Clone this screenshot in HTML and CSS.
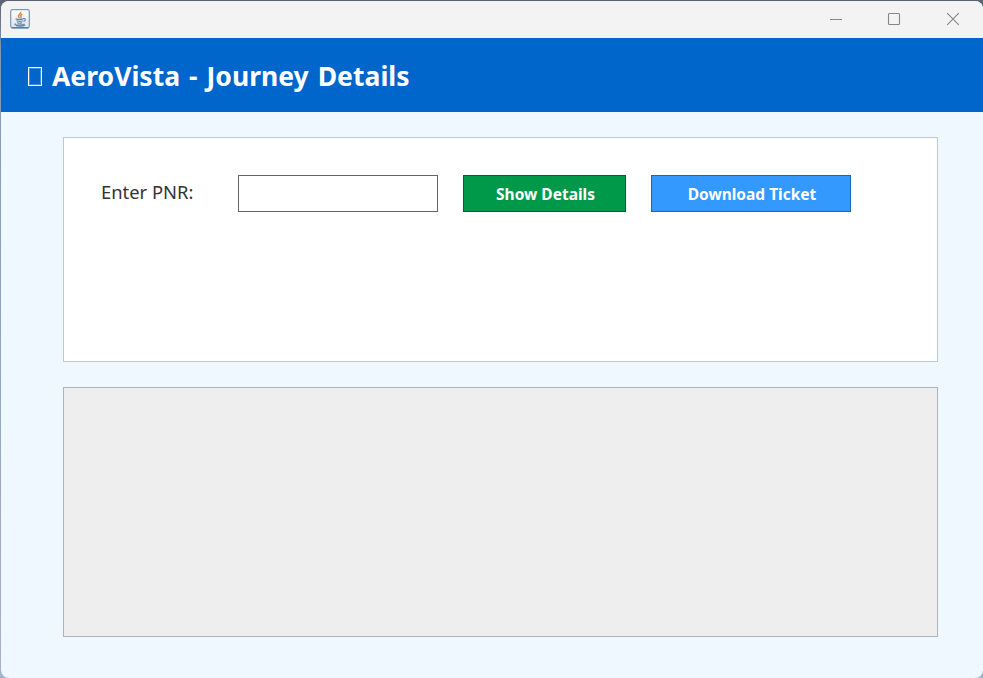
FILE: index.html
```html
<!DOCTYPE html>
<html lang="en">
<head>
<meta charset="utf-8">
<title>AeroVista</title>
<link rel="stylesheet" href="styles.css">
</head>
<body>
<div class="window">
  <div class="titlebar">
    <svg class="java" width="20" height="20" viewBox="0 0 20 20" fill="none">
      <defs><linearGradient id="g" x1="0" y1="0" x2="0" y2="1"><stop offset="0" stop-color="#fff"/><stop offset="1" stop-color="#dce4eb"/></linearGradient></defs>
      <rect x=".7" y=".7" width="18.6" height="18" rx="1.8" fill="url(#g)" stroke="#7e98ae" stroke-width="1.2"/>
      <path d="M1.5 18.8h17" stroke="#4f7494" stroke-width="1.2"/>
      <path d="M10.8 2.8c.8 2-3.6 2.9-2.2 5.1l1 1.3M12.3 5.3c-2.4 1-1.9 1.7-1.2 2.5.4.6 0 1.1-.6 1.5" stroke="#e08a45" stroke-width="1.5"/>
      <path d="M5.5 9.8c2 .9 6 .8 8 0M6.5 11.8c2 .7 4.8.7 6.2 0M7 13.7c1.7.6 3.8.6 5.2 0M13.4 9.6c2.8-.5 2.3 2.2 0 2.9M5.8 14.8c-4 1.3 6.5 2 8.8.1M6 16.8c3.2.6 7.4.3 9.3-.8" stroke="#5c87ab" stroke-width="1.1"/>
    </svg>
    <div class="controls">
      <svg width="14" height="14" viewBox="0 0 14 14"><path d="M1 7.5h12"/></svg>
      <svg width="14" height="14" viewBox="0 0 14 14"><rect x="1.5" y="1.5" width="11" height="11" rx="1"/></svg>
      <svg width="14" height="14" viewBox="0 0 14 14"><path d="M1.2 1.2l11.6 11.6M12.8 1.2L1.2 12.8"/></svg>
    </div>
  </div>
  <header class="banner"><span class="glyph"></span><h1>AeroVista - Journey Details</h1></header>
  <main>
    <section class="search">
      <label for="pnr">Enter PNR:</label>
      <input id="pnr" type="text">
      <button class="show"><span>Show Details</span></button>
      <button class="download"><span>Download Ticket</span></button>
    </section>
    <section class="results"></section>
  </main>
</div>
</body>
</html>
```
FILE: styles.css
```css
* { box-sizing: border-box; }
body {
  margin: 0;
  height: 678px;
  overflow: hidden;
  background: linear-gradient(#5d6373, #8299b5 8%, #a3b4ca);
  font-family: "Noto Sans", sans-serif;
}
.window {
  height: 677px;
  margin: 1px 0 0 1px;
  border-radius: 8px;
  overflow: hidden;
  background: #eff7ff;
}
.titlebar {
  height: 37px;
  padding: 0 23px 0 9px;
  display: flex;
  align-items: center;
  justify-content: space-between;
  background: #f3f3f3;
}
.java { margin-bottom: 2px; }
.controls { display: flex; gap: 44px; margin-bottom: 1px; }
.controls svg { fill: none; stroke: #868686; stroke-width: 1.1; }
.controls svg:last-child { margin-left: 1px; }
.banner {
  height: 74px;
  padding-left: 27px;
  display: flex;
  align-items: center;
  background: #0066cc;
  color: #fff;
}
.glyph { width: 14px; height: 19px; border: 1px solid #fff; margin-right: 10px; margin-top: 2px; box-shadow: inset 0 0 0 1px rgba(255, 255, 255, .25); }
h1 { margin: 2px 0 0; font-size: 26.5px; line-height: 36px; font-weight: 700; white-space: nowrap; letter-spacing: 0.03px; word-spacing: 2px; }
main { padding: 25px 45px 0 62px; }
.search {
  height: 225px;
  padding: 37px 0 0 37px;
  display: flex;
  align-items: flex-start;
  background: #fff;
  border: 1px solid #bfc7cf;
}
label { width: 137px; font-size: 18.4px; line-height: 34px; color: #333; }
input { width: 200px; height: 37px; padding: 0 8px; border: 1px solid #646464; background: #fff; font: 18px "Noto Sans", sans-serif; outline: 0; }
button { height: 37px; margin-left: 25px; padding: 0; color: #fff; font: 700 15.5px "Noto Sans", sans-serif; white-space: nowrap; }
.show { width: 163px; padding-left: 2px; background: #009949; border: 1px solid #006332; }
.download { width: 200px; padding-left: 2px; background: #3399ff; border: 1px solid #1769b3; }
.results { height: 250px; margin-top: 25px; background: #eee; border: 1px solid #acb3ba; }
```
